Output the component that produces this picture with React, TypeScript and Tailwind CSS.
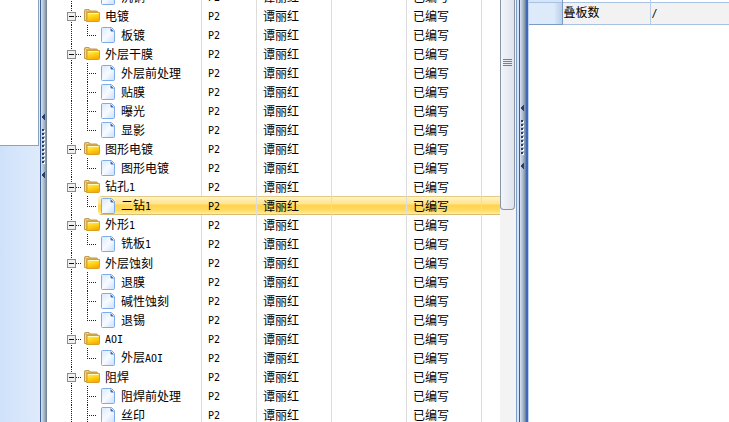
import clsx from 'clsx'

interface TreeRow {
  name: string
  folder?: boolean
  last?: boolean
  selected?: boolean
}

const rows: TreeRow[] = [
  { name: '沉铜', last: true },
  { name: '电镀', folder: true },
  { name: '板镀', last: true },
  { name: '外层干膜', folder: true },
  { name: '外层前处理' },
  { name: '贴膜' },
  { name: '曝光' },
  { name: '显影', last: true },
  { name: '图形电镀', folder: true },
  { name: '图形电镀', last: true },
  { name: '钻孔1', folder: true },
  { name: '二钻1', last: true, selected: true },
  { name: '外形1', folder: true },
  { name: '铣板1', last: true },
  { name: '外层蚀刻', folder: true },
  { name: '退膜' },
  { name: '碱性蚀刻' },
  { name: '退锡', last: true },
  { name: 'AOI', folder: true },
  { name: '外层AOI', last: true },
  { name: '阻焊', folder: true },
  { name: '阻焊前处理' },
  { name: '丝印' },
]

const highlight =
  'bg-[linear-gradient(#e3cb86_0px,#e3cb86_1px,#fff3c4_1px,#ffe48a_8px,#ffd34d_9px,#ffd95f_14px,#ffeda0_18px,#d9bd70_18px)]'

// half-width characters are set in a monospace face beside the full-width ones
function Label({ text }: { text: string }) {
  return (
    <>
      {text.split(/([A-Z0-9/]+)/).map((part, i) =>
        i % 2 ? (
          <span key={i} className="font-['DejaVu_Sans_Mono',monospace] text-[10px]">
            {part}
          </span>
        ) : (
          part
        )
      )}
    </>
  )
}

function FolderIcon() {
  return (
    <svg width="16" height="13" viewBox="0 0 16 13" className="shrink-0">
      <defs>
        <linearGradient id="folder" x1="0" y1="0" x2="0.4" y2="1">
          <stop offset="0" stopColor="#fff27a" />
          <stop offset="0.5" stopColor="#ffd81e" />
          <stop offset="1" stopColor="#f9ae00" />
        </linearGradient>
      </defs>
      <path d="M0.5 11.5V1.5Q0.5 0.5 1.5 0.5H5L6.5 2H12.5Q13.5 2 13.5 3V11.5Z" fill="#dcae4c" stroke="#bd9b58" />
      <path d="M1.5 11V2.5Q1.5 1.5 2.5 1.5H4.5" fill="none" stroke="#f0d79a" />
      <path d="M3 3.5H15.5V11.5Q15.5 12.5 14.5 12.5H2.5L3 11Z" fill="url(#folder)" stroke="#d8a02a" />
      <path d="M4 4.5H14.5" stroke="#fffac0" />
    </svg>
  )
}

function FileIcon() {
  return (
    <svg width="14" height="16" viewBox="0 0 14 16" className="shrink-0">
      <defs>
        <linearGradient id="file" x1="0" y1="0" x2="1" y2="1">
          <stop offset="0" stopColor="#d6e8ff" />
          <stop offset="0.5" stopColor="#f8fbff" />
          <stop offset="1" stopColor="#c9defa" />
        </linearGradient>
      </defs>
      <path d="M1.5 0.5H10.5L13.5 3.5V14.5Q13.5 15.5 12.5 15.5H1.5Q0.5 15.5 0.5 14.5V1.5Q0.5 0.5 1.5 0.5Z" fill="url(#file)" stroke="#7fabe8" />
      <path d="M9.5 1L13 4.5H10.5Q9.5 4.5 9.5 3.5Z" fill="#3469c0" />
    </svg>
  )
}

// dotted connectors of one row, with the expander on folder rows
function Branch({ row }: { row: TreeRow }) {
  return (
    <svg width={row.folder ? 37 : 51} height="19" shapeRendering="crispEdges" className="shrink-0">
      <path d="M24.5 0V19" stroke="#222" strokeDasharray="1 1" />
      {row.folder ? (
        <>
          <path d="M29 10.5H35" stroke="#222" strokeDasharray="1 1" />
          <rect x="20.5" y="6.5" width="8" height="8" fill="#f0f0f0" stroke="#8c8c8c" />
          <path d="M22 10.5H27" stroke="#111" />
        </>
      ) : (
        <>
          <path d={row.last ? 'M40.5 0V10' : 'M40.5 0V19'} stroke="#222" strokeDasharray="1 1" />
          <path d="M40 10.5H50" stroke="#222" strokeDasharray="1 1" />
        </>
      )}
    </svg>
  )
}

function ProcessTree() {
  return (
    <table className="w-full table-fixed border-collapse -mt-[13px]">
      <colgroup>
        <col className="w-[155px]" />
        <col className="w-[55px]" />
        <col className="w-[75px]" />
        <col className="w-[75px]" />
        <col className="w-[75px]" />
        <col />
      </colgroup>
      <tbody>
        {rows.map((row, i) => {
          const cell = clsx(
            'h-[19px] p-0 pl-1.5 pt-0.5 leading-4 shadow-[inset_-1px_0_#dcdcdc]',
            row.selected && highlight
          )
          return (
            <tr key={i} aria-selected={row.selected}>
              <td className="h-[19px] p-0 shadow-[inset_-1px_0_#dcdcdc]">
                <div className="flex h-[19px]">
                  <Branch row={row} />
                  <div
                    className={clsx(
                      'flex flex-1 items-center',
                      row.folder ? 'gap-[5px]' : 'gap-1.5 pl-[3px]',
                      row.selected && 'rounded-l-sm',
                      row.selected && highlight
                    )}
                  >
                    {row.folder ? <FolderIcon /> : <FileIcon />}
                    <span className="pt-0.5 leading-4">
                      <Label text={row.name} />
                    </span>
                  </div>
                </div>
              </td>
              <td className={cell}>
                <Label text="P2" />
              </td>
              <td className={cell}>谭丽红</td>
              <td className={cell}></td>
              <td className={cell}>已编写</td>
              <td className={clsx('p-0', row.selected && highlight)}></td>
            </tr>
          )
        })}
      </tbody>
    </table>
  )
}

function Grip({ className }: { className: string }) {
  return (
    <button aria-label="Collapse panel" className={clsx('block w-full', className)}>
      <svg width="6" height="66" viewBox="0 0 6 66" shapeRendering="crispEdges">
        <path d="M0 4L4 0V8Z" fill="#25406f" />
        <path d="M3 17V51" stroke="#fff" strokeWidth="2" strokeDasharray="2 2" />
        <path d="M2 16V50" stroke="#25406f" strokeWidth="2" strokeDasharray="2 2" />
        <path d="M0 62L4 58V66Z" fill="#25406f" />
      </svg>
    </button>
  )
}

export default function App() {
  return (
    <div className="flex h-screen overflow-hidden bg-white font-['Liberation_Sans','Noto_Sans_CJK_SC',sans-serif] text-xs leading-[19px] text-black">
      <aside className="flex w-10 shrink-0 flex-col bg-linear-to-r from-[#cfe1fa] to-[#dfebfc]">
        <div className="mr-px h-[146px] border-r border-b border-[#8ba3c0] bg-white"></div>
      </aside>
      <div className="w-[7px] shrink-0 border-l border-[#3c5f99] bg-[linear-gradient(90deg,#d5e3f5,#a9b9c9_50%,#6d7d8d)]">
        <Grip className="pt-[113px]" />
      </div>

      <main className="min-w-0 flex-1 overflow-hidden">
        <ProcessTree />
      </main>

      <div className="w-4 shrink-0 bg-[#f3f3f3]">
        <div className="mr-px flex h-[210px] flex-col items-center rounded-b-sm border-x border-b border-[#8b95a1] bg-linear-to-r from-[#f2f5f9] to-[#dfe5ee] pt-[58px]">
          <svg width="9" height="8" shapeRendering="crispEdges">
            <path d="M0 1.5H9M0 3.5H9M0 5.5H9M0 7.5H9" stroke="#77808c" />
          </svg>
        </div>
      </div>
      <div className="w-1 shrink-0 border-x border-l-[#7f9cc8] border-r-[#3c5f99] bg-[#d5e4f8]"></div>
      <div className="w-[9px] shrink-0 border-r border-[#b9d0f2] bg-[linear-gradient(90deg,#d5e3f5_0px,#a9b9c9_3px,#6d7d8d_6px,#3f68b5_6px)]">
        <Grip className="pt-[104px]" />
      </div>

      <section className="w-[200px] shrink-0">
        <table className="w-full table-fixed border-collapse">
          <colgroup>
            <col className="w-[33px]" />
            <col className="w-[88px]" />
            <col />
          </colgroup>
          <tbody>
            <tr className="h-[2px] border-b border-[#a9c2e4]">
              <td className="border-r border-[#7d9cc4] bg-[#d5e4f6] p-0"></td>
              <td className="border-r border-[#b5cdec] p-0"></td>
              <td className="p-0"></td>
            </tr>
            <tr className="h-[22px] border-b border-[#a9c2e4] bg-[#f2f2f2]">
              <td className="border-r border-b border-[#7d9cc4] bg-linear-to-r from-[#dceafa] from-75% to-[#b9cfea] p-0"></td>
              <td className="border-r border-[#b5cdec] p-0 pl-px">叠板数</td>
              <td className="p-0 pl-px">
                <Label text="/" />
              </td>
            </tr>
          </tbody>
        </table>
      </section>
    </div>
  )
}
